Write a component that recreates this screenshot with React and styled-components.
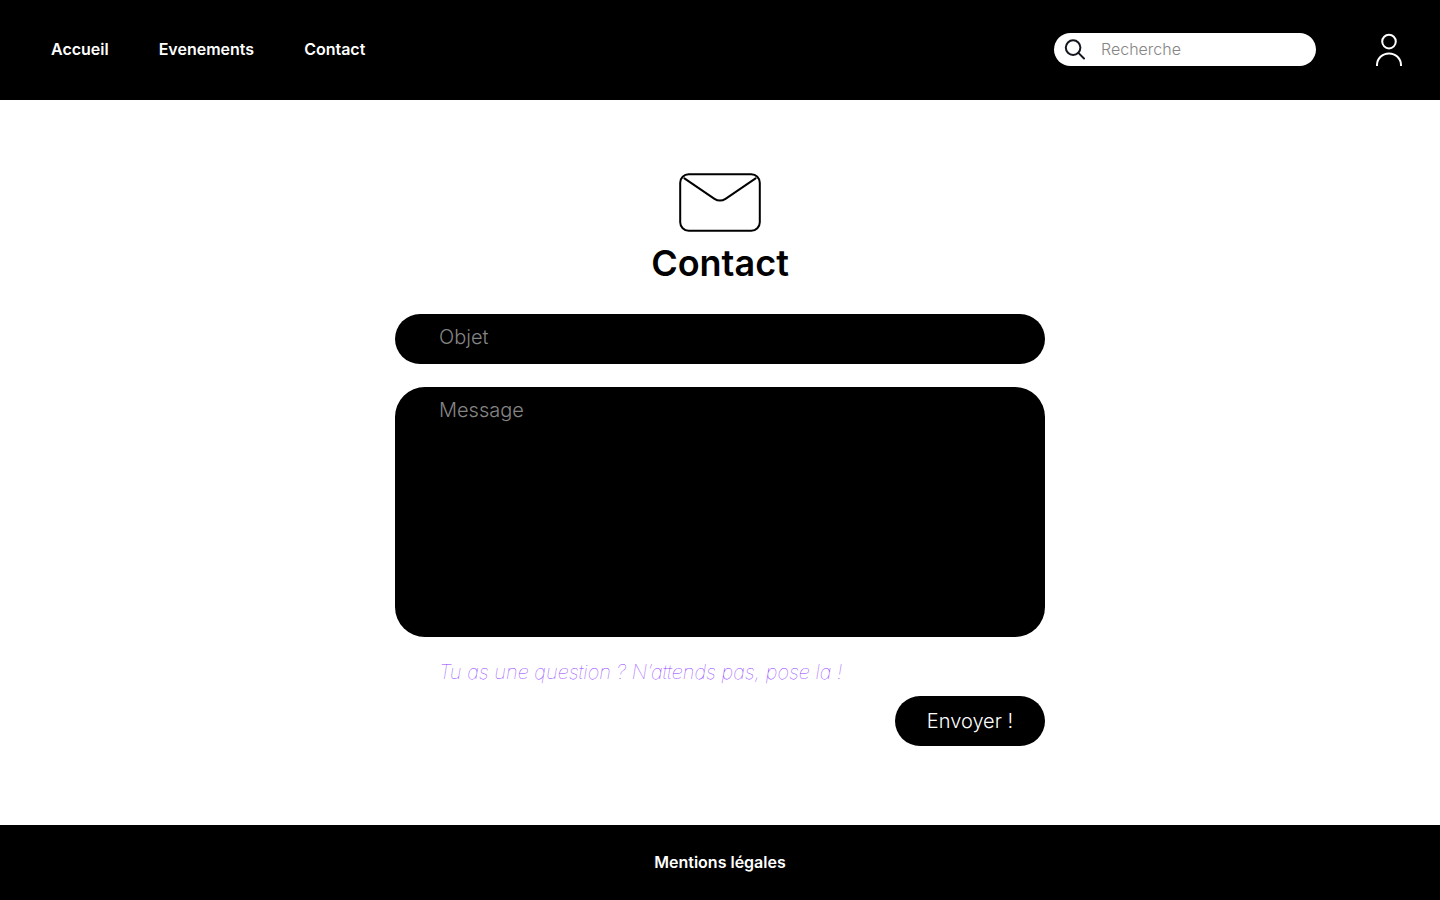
import React from "react";
import styled, { createGlobalStyle } from "styled-components";

const Global = createGlobalStyle`
  *, *::before, *::after { box-sizing: border-box; }
  body { margin: 0; background: #fff; color: #000; font-family: Inter, sans-serif; }
  input, textarea, button { font-family: inherit; }
`;

const Page = styled.div`
  min-height: 100vh;
  display: flex;
  flex-direction: column;
`;

const Header = styled.header`
  height: 100px;
  padding: 0 38px 2px 51px;
  background: #000;
  display: flex;
  align-items: center;
  justify-content: space-between;
`;

const Nav = styled.nav`
  display: flex;
  gap: 50px;
`;

const BarLink = styled.a`
  color: #fff;
  font-size: 16px;
  line-height: 20px;
  font-weight: 600;
  text-decoration: none;
`;

const Tools = styled.div`
  display: flex;
  align-items: center;
  gap: 60px;
`;

const Search = styled.label`
  width: 262px;
  height: 33px;
  padding: 0 16px 0 10px;
  border-radius: 17px;
  background: #fff;
  display: flex;
  align-items: center;
  gap: 15px;
  svg { flex: none; }
`;

const SearchInput = styled.input`
  flex: 1;
  min-width: 0;
  padding: 0;
  border: 0;
  outline: 0;
  background: none;
  font-size: 16px;
  line-height: 20px;
  font-weight: 300;
  &::placeholder { color: #858585; opacity: 1; }
`;

const Account = styled.a`
  display: flex;
  color: #fff;
`;

const Main = styled.main`
  flex: 1;
  padding: 73px 24px 79px;
  display: flex;
  flex-direction: column;
  align-items: center;
`;

const Title = styled.h1`
  margin: 8px 0 28px;
  font-size: 36px;
  line-height: 46px;
  font-weight: 600;
`;

const Form = styled.form`
  width: 100%;
  max-width: 650px;
  display: flex;
  flex-direction: column;
`;

const Subject = styled.input`
  height: 50px;
  margin-bottom: 23px;
  padding: 0 44px 4px;
  border: 0;
  border-radius: 25px;
  background: #000;
  color: #fff;
  font-size: 20px;
  line-height: 24px;
  font-weight: 300;
  &::placeholder { color: #858585; opacity: 1; }
`;

const Message = styled.textarea`
  height: 250px;
  padding: 11px 44px;
  border: 0;
  border-radius: 30px;
  background: #000;
  color: #fff;
  font-size: 20px;
  line-height: 24px;
  font-weight: 300;
  resize: none;
  &::placeholder { color: #858585; opacity: 1; }
`;

const Hint = styled.p`
  margin: 23px 44px 12px;
  color: #8f3cff;
  font-size: 20px;
  line-height: 24px;
  font-weight: 100;
  font-style: oblique 10deg;
`;

const Submit = styled.button`
  align-self: flex-end;
  width: 150px;
  height: 50px;
  padding: 0;
  border: 0;
  border-radius: 25px;
  background: #000;
  color: #fff;
  font-size: 20px;
  line-height: 24px;
  font-weight: 300;
`;

const Footer = styled.footer`
  height: 75px;
  padding-bottom: 2px;
  background: #000;
  display: flex;
  align-items: center;
  justify-content: center;
`;

const SearchIcon = () => (
  <svg width="22" height="22" viewBox="0 0 22 22" fill="none" stroke="#14171f" strokeWidth="2" strokeLinecap="round" aria-hidden="true">
    <circle cx="9.1" cy="9.6" r="7.3" />
    <path d="M14.4 14.9l5.6 5.6" />
  </svg>
);

const UserIcon = () => (
  <svg width="26" height="34" viewBox="0 0 26 34" fill="none" stroke="currentColor" strokeWidth="2" aria-hidden="true">
    <circle cx="13" cy="9.6" r="6.8" />
    <path d="M1 34v-1a12 11.6 0 0 1 24 0v1" />
  </svg>
);

const MailIcon = () => (
  <svg width="82" height="59" viewBox="0 0 82 59" fill="none" stroke="#000" strokeWidth="2" strokeLinecap="round" aria-hidden="true">
    <rect x="1.2" y="1.2" width="79.6" height="56.6" rx="8.5" />
    <path d="M5.4 5.4l30.1 20.4q5.5 3.6 11 0L76.6 5.4" />
  </svg>
);

export default function App() {
  return (
    <Page>
      <Global />
      <Header>
        <Nav>
          <BarLink href="#accueil">Accueil</BarLink>
          <BarLink href="#evenements">Evenements</BarLink>
          <BarLink href="#contact">Contact</BarLink>
        </Nav>
        <Tools>
          <Search>
            <SearchIcon />
            <SearchInput type="search" placeholder="Recherche" aria-label="Recherche" />
          </Search>
          <Account href="#compte" aria-label="Mon compte"><UserIcon /></Account>
        </Tools>
      </Header>
      <Main>
        <MailIcon />
        <Title>Contact</Title>
        <Form onSubmit={(e) => e.preventDefault()}>
          <Subject type="text" name="objet" placeholder="Objet" aria-label="Objet" />
          <Message name="message" placeholder="Message" aria-label="Message" />
          <Hint>Tu as une question ? N’attends pas, pose la !</Hint>
          <Submit type="submit">Envoyer !</Submit>
        </Form>
      </Main>
      <Footer>
        <BarLink href="#mentions">Mentions légales</BarLink>
      </Footer>
    </Page>
  );
}
